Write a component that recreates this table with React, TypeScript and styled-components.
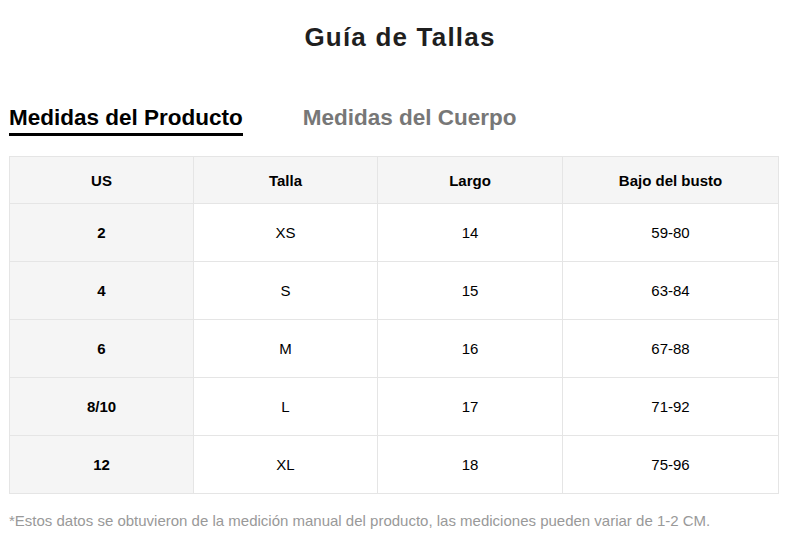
import React from "react";
import styled, { createGlobalStyle } from "styled-components";

const GlobalStyle = createGlobalStyle`
  body {
    margin: 0;
    background: #fff;
    font-family: "Liberation Sans", Arial, sans-serif;
    color: #000;
  }
`;

const Page = styled.div`
  width: 770px;
  padding: 0 6px 0 9px;
`;

const Title = styled.h2`
  margin: 0;
  padding: 22px 0 0 12px;
  height: 34px;
  line-height: 30px;
  text-align: center;
  font-size: 26px;
  letter-spacing: 1.2px;
  font-weight: bold;
  color: #1f1f1f;
`;

const Tabs = styled.div`
  display: flex;
  gap: 60px;
  margin-top: 49px;
`;

const Tab = styled.div<{ $active?: boolean }>`
  font-size: 22.5px;
  font-weight: bold;
  line-height: 26px;
  padding-bottom: 2px;
  color: ${(p) => (p.$active ? "#000" : "#777")};
  border-bottom: 3px solid ${(p) => (p.$active ? "#000" : "transparent")};
`;

const Table = styled.table`
  margin-top: 20px;
  border-collapse: collapse;
  table-layout: fixed;
  font-size: 15px;
`;

const Th = styled.th<{ $w: number }>`
  width: ${(p) => p.$w}px;
  height: 46px;
  padding: 0;
  background: #f5f5f5;
  border: 1px solid #e5e5e5;
  font-weight: bold;
  text-align: center;
`;

const Td = styled.td<{ $head?: boolean }>`
  height: 57px;
  padding: 0;
  border: 1px solid #e5e5e5;
  text-align: center;
  background: ${(p) => (p.$head ? "#f5f5f5" : "#fff")};
  font-weight: ${(p) => (p.$head ? "bold" : "normal")};
`;

const Note = styled.p`
  margin: 18px 0 0;
  font-size: 15px;
  color: #999;
`;

const columns: [string, number][] = [
  ["US", 183],
  ["Talla", 183],
  ["Largo", 184],
  ["Bajo del busto", 215],
];

const rows = [
  ["2", "XS", "14", "59-80"],
  ["4", "S", "15", "63-84"],
  ["6", "M", "16", "67-88"],
  ["8/10", "L", "17", "71-92"],
  ["12", "XL", "18", "75-96"],
];

export default function App(): React.ReactElement {
  return (
    <Page>
      <GlobalStyle />
      <Title>Guía de Tallas</Title>
      <Tabs>
        <Tab $active>Medidas del Producto</Tab>
        <Tab>Medidas del Cuerpo</Tab>
      </Tabs>
      <Table>
        <thead>
          <tr>
            {columns.map(([c, w]) => (
              <Th key={c} $w={w}>{c}</Th>
            ))}
          </tr>
        </thead>
        <tbody>
          {rows.map((r) => (
            <tr key={r[0]}>
              {r.map((v, i) => (
                <Td key={i} $head={i === 0}>{v}</Td>
              ))}
            </tr>
          ))}
        </tbody>
      </Table>
      <Note>*Estos datos se obtuvieron de la medición manual del producto, las mediciones pueden variar de 1-2 CM.</Note>
    </Page>
  );
}
